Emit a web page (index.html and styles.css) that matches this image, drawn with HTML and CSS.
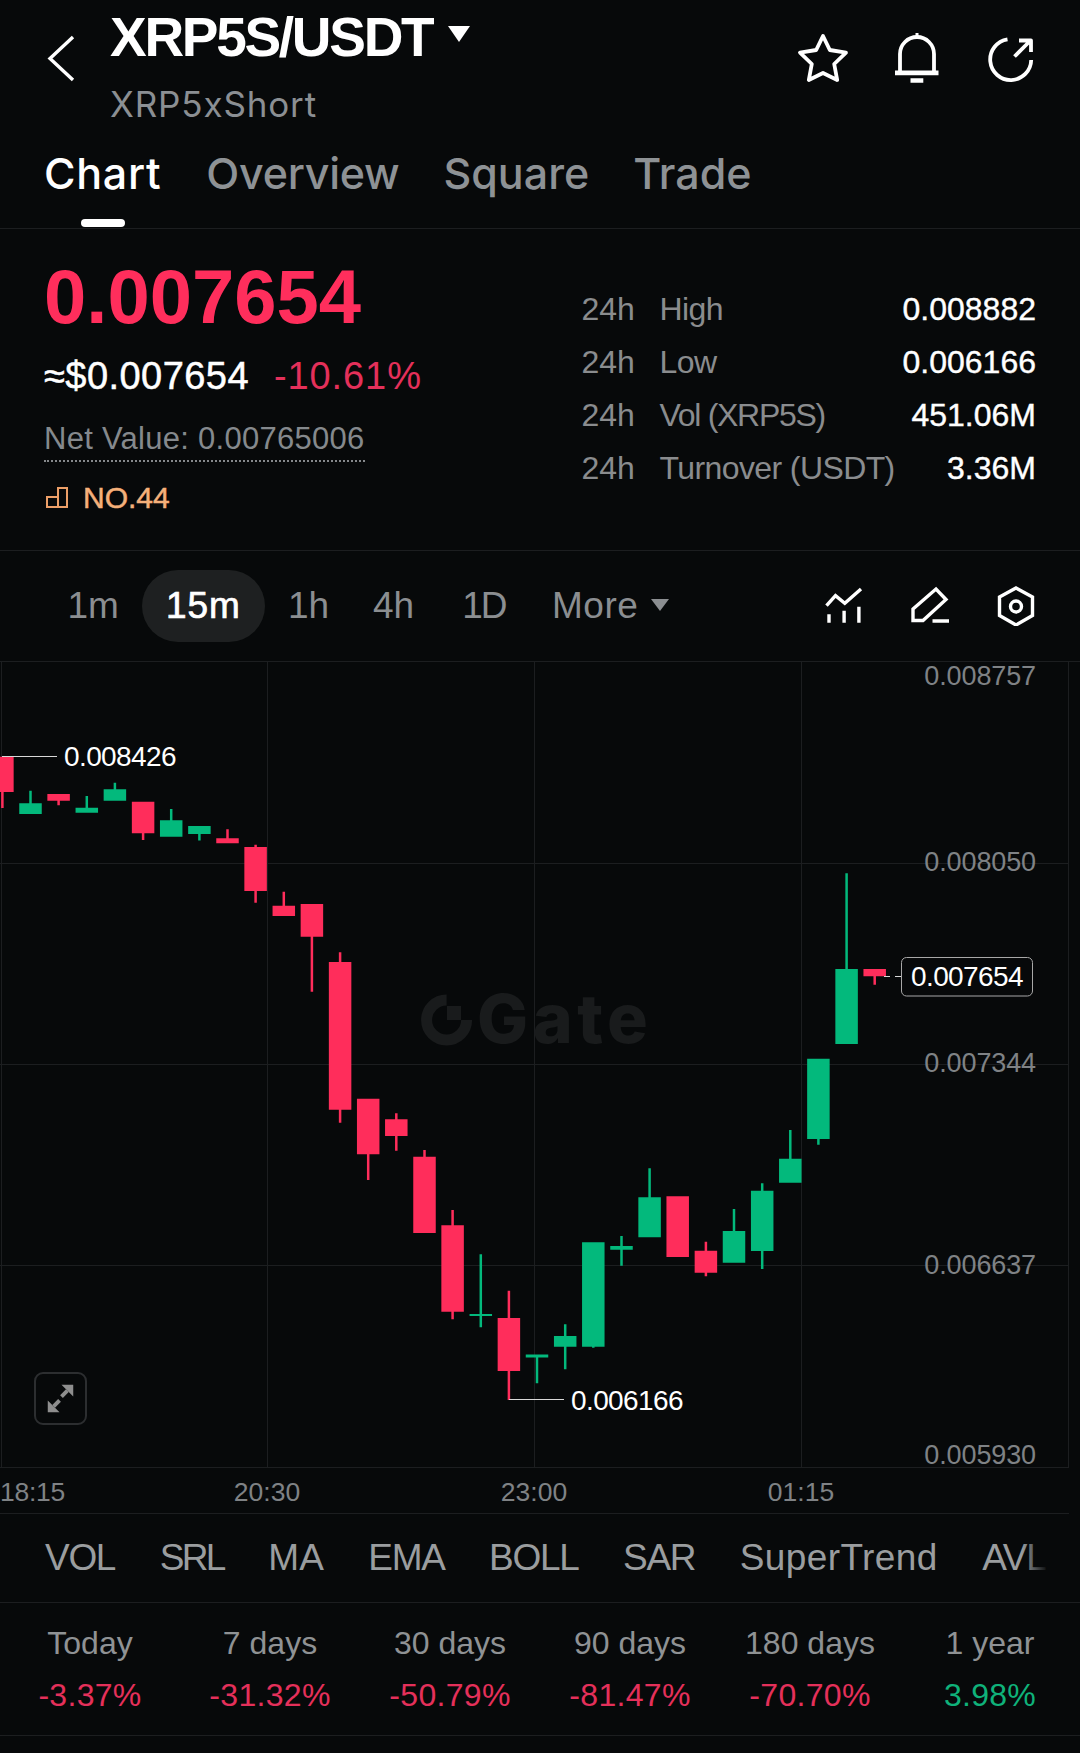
FILE: index.html
```html
<!DOCTYPE html>
<html lang="en">
<head>
<meta charset="utf-8">
<title>XRP5S/USDT</title>
<link rel="stylesheet" href="styles.css">
</head>
<body>
<main class="page">
  <header class="top">
    <div class="nav-row">
      <svg class="back" viewBox="0 0 30 50"><path d="M27 4 4 25.5 27 47"/></svg>
      <div class="pair">
        <div class="pair-title"><h1>XRP5S/USDT</h1><span class="caret caret-white"></span></div>
        <div class="pair-sub">XRP5xShort</div>
      </div>
      <div class="nav-icons">
        <svg class="icon52" viewBox="0 0 52 52"><path d="M26 4 32.8 18 49 20.6 37.2 32 40.2 48 26 41 11.8 48 14.8 32 3 20.6 19.2 18Z"/></svg>
        <svg class="icon52" viewBox="0 0 52 52"><path d="M9 39V22a17 17 0 0 1 34 0V39"/><path class="solid" d="M24.5 1h3v4h-3zM4 38.5h43.5v4.7H4zM19.5 46.2h12.8v4.6H19.5z"/></svg>
        <svg class="icon52" viewBox="0 0 52 52"><path d="M22.5 7.3A20.5 20.5 0 1 0 46.2 28"/><path d="M29.5 24.5 45 9M34 8.5H46V20"/></svg>
      </div>
    </div>
    <nav class="tabs">
      <a class="tab tab-on">Chart</a>
      <a class="tab tab-tight">Overview</a>
      <a class="tab">Square</a>
      <a class="tab">Trade</a>
    </nav>
  </header>

  <section class="quote">
    <div class="quote-main">
      <div class="price">0.007654</div>
      <div class="price-sub"><span class="fiat">≈$0.007654</span><span class="change">-10.61%</span></div>
      <div class="net"><span class="net-text">Net Value: 0.00765006</span></div>
      <div class="rank">
        <svg class="rank-icon" viewBox="0 0 22 21"><path d="M1 10h11v10H1zM12 1h9v19h-9z"/></svg>
        <span>NO.44</span>
      </div>
    </div>
    <dl class="stats">
      <div class="stat"><dt><span class="stat-span">24h</span>High</dt><dd>0.008882</dd></div>
      <div class="stat"><dt><span class="stat-span">24h</span>Low</dt><dd>0.006166</dd></div>
      <div class="stat"><dt class="stat-tight"><span class="stat-span">24h</span>Vol (XRP5S)</dt><dd>451.06M</dd></div>
      <div class="stat"><dt><span class="stat-span">24h</span>Turnover (USDT)</dt><dd>3.36M</dd></div>
    </dl>
  </section>

  <section class="toolbar">
    <div class="ranges">
      <a class="range">1m</a>
      <a class="range range-on">15m</a>
      <a class="range">1h</a>
      <a class="range">4h</a>
      <a class="range range-day">1D</a>
      <a class="range range-more">More<span class="caret caret-grey"></span></a>
    </div>
    <div class="tools">
      <svg class="icon40" viewBox="0 0 40 40"><path d="M2.5 19.7 11.5 9.7 20.8 17.3 37 3M5 28.3V36.7M20.1 24.7V36.7M34.9 20.7V36.7"/></svg>
      <svg class="icon40" viewBox="0 0 40 40"><path d="M3 34.5V23L26 3 36 13.5 13 34.5ZM22.5 35H39"/></svg>
      <svg class="icon40" viewBox="0 0 40 40"><path d="M20 2 36.5 11V29.5L20 39 3.5 29.5V11Z"/><circle cx="20" cy="20.5" r="5.5"/></svg>
    </div>
  </section>

  <section class="chart">
    <svg class="chart-svg" viewBox="0 662 1080 806">
      <path class="grid" d="M1.5 662V1467M267.5 662V1467M534.5 662V1467M801.5 662V1467M1068.5 662V1467M0 863.5H1069M0 1064.5H1069M0 1265.5H1069M0 1467.5H1069"/>
      <g class="mark">
        <path d="M446.6 1000A20 20 0 1 0 466.6 1020" class="mark-ring"/>
        <path d="M447 1006h14v14h-14z"/>
        <text class="mark-text" x="477" y="1043">Gate</text>
      </g>
      <path class="candle-red" d="M-8.85 756.7h22.5V792h-22.5zM1.15 792h2.5v16h-2.5zM47.35 794h22.5v6.7h-22.5zM57.35 800.7h2.5v4.6h-2.5zM131.85 801.7h22.5v31.6h-22.5zM141.85 833h2.5v7h-2.5zM216.25 838.3h22.5v5h-22.5zM226.25 829.3h2.5v9h-2.5zM244.35 847h22.5v44h-22.5zM254.35 844.7h2.5v58h-2.5zM272.55 905.7h22.5V916h-22.5zM282.55 891.7h2.5v14h-2.5zM300.65 904h22.5v32.7h-22.5zM310.65 936.7h2.5v55h-2.5zM328.85 962h22.5v147.7h-22.5zM338.85 952.3h2.5v170.4h-2.5zM356.95 1098.7h22.5v55.6h-22.5zM366.95 1154h2.5v26h-2.5zM385.05 1119.3h22.5v16.7h-22.5zM395.05 1113.3h2.5v37.4h-2.5zM413.25 1156.7h22.5v76.3h-22.5zM423.25 1150h2.5v6.7h-2.5zM441.35 1225.3h22.5v86.4h-22.5zM451.35 1210h2.5v109.3h-2.5zM497.65 1318h22.5v53h-22.5zM507.65 1290.7h2.5V1400h-2.5zM666.45 1196.3h22.5V1257h-22.5zM694.65 1250.7h22.5v22h-22.5zM704.65 1241.7h2.5v34.6h-2.5zM863.45 969h22.5v7.3h-22.5zM873.45 976h2.5v8.7h-2.5z"/>
      <path class="candle-green" d="M19.25 803.3h22.5V814h-22.5zM29.25 790.7h2.5v12.6h-2.5zM75.55 807.7h22.5v5h-22.5zM85.55 796h2.5v11.7h-2.5zM103.65 789.3h22.5v11.4h-22.5zM113.65 782.7h2.5v6.6h-2.5zM159.95 820.3h22.5v16.4h-22.5zM169.95 809h2.5v11.3h-2.5zM188.15 826h22.5v8h-22.5zM198.15 834h2.5v6.5h-2.5zM469.55 1314h22.5v2h-22.5zM479.55 1254.3h2.5v73h-2.5zM525.75 1354.5h22.5v3h-22.5zM535.75 1357h2.5v26.3h-2.5zM553.95 1336h22.5v10.7h-22.5zM563.95 1324.3h2.5v45h-2.5zM582.05 1242.3h22.5v104.4h-22.5zM592.05 1346h2.5v1.7h-2.5zM610.25 1246h22.5v3.7h-22.5zM620.25 1236h2.5v29.7h-2.5zM638.35 1197.3h22.5v40h-22.5zM648.35 1168.3h2.5v29h-2.5zM722.75 1231h22.5v31.7h-22.5zM732.75 1209h2.5v22h-2.5zM750.95 1190.7h22.5V1251h-22.5zM760.95 1183.3h2.5V1269h-2.5zM779.05 1158.7h22.5v24h-22.5zM789.05 1130h2.5v28.7h-2.5zM807.15 1058.7h22.5V1139h-22.5zM817.15 1139h2.5v5.7h-2.5zM835.35 969h22.5v75h-22.5zM845.35 873.3h2.5V969h-2.5z"/>
      <path class="leader" d="M2 756.5H57M509 1399.5H564"/>
      <path class="leader" d="M884 976.5H890M895 976.5H902"/>
      <text class="tick" x="1036" y="685">0.008757</text>
      <text class="tick" x="1036" y="871">0.008050</text>
      <text class="tick" x="1036" y="1072">0.007344</text>
      <text class="tick" x="1036" y="1274">0.006637</text>
      <text class="tick" x="1036" y="1464">0.005930</text>
      <text class="extreme" x="64" y="766">0.008426</text>
      <text class="extreme" x="571" y="1410">0.006166</text>
      <rect class="last-box" x="901.5" y="957.5" width="131" height="38.5" rx="5"/>
      <text class="extreme" x="911" y="986">0.007654</text>
    </svg>
    <button class="expand" aria-label="Expand">
      <svg viewBox="0 0 50 50"><path class="expand-head" d="M38 11V23L26 11ZM12 39V27L24 39Z"/><path class="expand-line" d="M32 17 26 23M18 33 24 27"/></svg>
    </button>
  </section>

  <div class="times">
    <span class="time time-first">18:15</span>
    <span class="time">20:30</span>
    <span class="time">23:00</span>
    <span class="time">01:15</span>
  </div>

  <nav class="indicators">
    <a>VOL</a><a class="ind-tight">SRL</a><a class="ind-loose">MA</a><a>EMA</a><a>BOLL</a><a>SAR</a><a class="ind-wide">SuperTrend</a><a>AVL</a>
  </nav>

  <section class="returns">
    <div class="ret"><span class="ret-label">Today</span><span class="ret-val neg">-3.37%</span></div>
    <div class="ret"><span class="ret-label">7 days</span><span class="ret-val neg">-31.32%</span></div>
    <div class="ret"><span class="ret-label">30 days</span><span class="ret-val neg">-50.79%</span></div>
    <div class="ret"><span class="ret-label">90 days</span><span class="ret-val neg">-81.47%</span></div>
    <div class="ret"><span class="ret-label">180 days</span><span class="ret-val neg">-70.70%</span></div>
    <div class="ret"><span class="ret-label">1 year</span><span class="ret-val pos">3.98%</span></div>
  </section>
</main>
</body>
</html>
```
FILE: styles.css
```css
* { box-sizing: border-box; }
html, body { margin: 0; padding: 0; background: #07090a; }
body { font-family: "Liberation Sans", Arial, sans-serif; color: #fff; }
.page { width: 1080px; height: 1753px; overflow: hidden; background: #07090a; }
h1, dl, dd { margin: 0; }

/* header */
.top { height: 229px; border-bottom: 1px solid #1c1e20; }
.nav-row { display: flex; align-items: flex-start; height: 148px; padding: 7px 43px 0 46px; }
.back { width: 30px; height: 50px; margin-top: 26px; fill: none; stroke: #fff; stroke-width: 3.4; }
.pair { margin-left: 34px; }
.pair-title { display: flex; align-items: center; }
.pair-title h1 { font-size: 55px; line-height: 60px; font-weight: 700; letter-spacing: -2.3px; }
.caret { display: inline-block; width: 0; height: 0; border-style: solid; border-color: transparent; border-bottom-width: 0; }
.caret-white { border-width: 16px 11px 0; border-top-color: #fff; margin: -7px 0 0 16px; }
.pair-sub { margin-top: 17px; font-family: Inter, "Liberation Sans", sans-serif; font-size: 35px; line-height: 40px; color: #8b8f93; letter-spacing: 0.85px; }
.nav-icons { display: flex; gap: 42px; margin-left: auto; margin-top: 24.5px; }
.icon52 { width: 52px; height: 52px; fill: none; stroke: #fff; stroke-width: 3.8; stroke-linejoin: round; }
.icon52 .solid { fill: #fff; stroke: none; }

.tabs { display: flex; gap: 44px; padding-left: 44px; }
.tab { display: flex; flex-direction: column; font-family: Inter, "Liberation Sans", sans-serif; font-size: 43px; font-weight: 500; line-height: 50px; color: #8e9295; }
.tab-on { margin-right: 1px; color: #fff; letter-spacing: 0.7px; }
.tab-tight { letter-spacing: -0.25px; }
.tab-on::after { content: ""; width: 44px; height: 8px; margin: 21px auto 0; border-radius: 4px; background: #fff; }

/* quote */
.quote { display: flex; justify-content: space-between; height: 322px; padding: 26px 44px 0; border-bottom: 1px solid #1c1e20; }
.price { font-size: 76px; line-height: 84px; font-weight: 700; color: #ff2e5c; }
.price-sub { display: flex; gap: 25px; margin-top: 15px; font-size: 38px; line-height: 44px; }
.fiat { -webkit-text-stroke: 0.5px #fff; letter-spacing: 0.45px; }
.change { color: #e4305a; letter-spacing: 0.9px; }
.net { margin-top: 22.5px; }
.net-text { display: inline-block; padding-bottom: 3.5px; border-bottom: 2px dotted #85888b; font-size: 31px; line-height: 36px; color: #85898d; letter-spacing: 0.27px; }
.rank { display: flex; align-items: center; gap: 15px; margin-top: 18.5px; font-size: 30px; line-height: 34px; color: #f5b07a; -webkit-text-stroke: 0.5px #f5b07a; }
.rank-icon { width: 22px; height: 21px; margin-left: 2px; fill: none; stroke: #ec9f68; stroke-width: 2; -webkit-text-stroke: 0; }

.stats { width: 454.5px; padding-top: 27.5px; }
.stat { display: flex; justify-content: space-between; height: 53px; font-size: 32px; line-height: 53px; }
.stat dt { color: #8a8c8e; letter-spacing: -0.6px; }
.stat .stat-tight { letter-spacing: -1.3px; }
.stat-span { display: inline-block; width: 78px; letter-spacing: 0; }
.stat dd { -webkit-text-stroke: 0.4px #fff; }

/* toolbar */
.toolbar { display: flex; align-items: center; justify-content: space-between; height: 111px; padding: 0 44px 0 45.5px; border-bottom: 1px solid #1c1e20; }
.ranges { display: flex; align-items: center; }
.range { display: flex; align-items: center; height: 72px; padding: 0 22px; border-radius: 36px; font-size: 37px; color: #8b8e91; }
.range:first-child { padding-right: 23px; }
.range-on { margin-right: 1px; padding: 0 24px; background: #1e2021; color: #fff; -webkit-text-stroke: 0.7px #fff; letter-spacing: 1px; }
.range-day { padding: 0 24.5px 0 26px; letter-spacing: -2px; }
.range-more { letter-spacing: 0.5px; }
.caret-grey { border-width: 12px 9.5px 0; border-top-color: #8b8e91; margin: -2px 0 0 13px; }
.tools { display: flex; gap: 46px; }
.icon40 { width: 40px; height: 40px; fill: none; stroke: #fff; stroke-width: 3.4; }

/* chart */
.chart { position: relative; height: 806px; }
.chart-svg { display: block; width: 1080px; height: 806px; overflow: visible; }
.grid { fill: none; stroke: #1c1e20; stroke-width: 1; }
.mark { fill: #191b1c; }
.mark-ring { fill: none; stroke: #191b1c; stroke-width: 11; }
.mark-text { font-family: Inter, "Liberation Sans", sans-serif; font-size: 68px; font-weight: 800; letter-spacing: 4.5px; }
.candle-red { fill: #ff2d5b; }
.candle-green { fill: #03b97c; }
.leader { fill: none; stroke: #d8d8d8; stroke-width: 1; }
.tick { font-size: 27px; letter-spacing: -0.12px; fill: #7f8285; text-anchor: end; }
.extreme { font-size: 28px; letter-spacing: -0.6px; fill: #fff; }
.last-box { fill: #07090a; stroke: #a8a8a8; stroke-width: 1; }
.expand { position: absolute; left: 34px; top: 710px; width: 53px; height: 53px; padding: 0; border: 2px solid #2c2e30; border-radius: 9px; background: transparent; }
.expand svg { display: block; width: 49px; height: 49px; }
.expand-head { fill: #8e8e8e; }
.expand-line { fill: none; stroke: #8e8e8e; stroke-width: 4; }

/* time axis */
.times { display: grid; grid-template-columns: repeat(4, 267px); height: 46px; margin-right: 11px; border-bottom: 1px solid #1c1e20; font-size: 26.5px; line-height: 48px; color: #7f8285; }
.time { width: 68px; text-align: center; transform: translateX(-34px); }
.time-first { transform: none; text-align: left; letter-spacing: -0.3px; }

/* indicators */
.indicators { position: relative; display: flex; gap: 44.5px; height: 89px; padding-left: 45px; border-bottom: 1px solid #1c1e20; font-size: 37px; line-height: 88px; color: #9a9d9f; letter-spacing: -1.3px; overflow: hidden; }
.indicators .ind-tight { letter-spacing: -2.6px; }
.indicators .ind-loose { letter-spacing: 0; }
.indicators .ind-wide { letter-spacing: 0.4px; }
.indicators::after { content: ""; position: absolute; left: 1022px; top: 0; width: 26px; height: 88px; background: linear-gradient(90deg, rgba(7,9,10,0), #07090a); }

/* returns */
.returns { display: grid; grid-template-columns: repeat(6, 180px); height: 133px; border-bottom: 1px solid #1c1e20; }
.ret { display: flex; flex-direction: column; align-items: center; padding-top: 22px; font-size: 32px; line-height: 37px; }
.ret-label { color: #8f9294; }
.ret-val { margin-top: 14.5px; letter-spacing: 0.3px; }
.neg { color: #e4305a; }
.pos { color: #0fb27a; }
```
